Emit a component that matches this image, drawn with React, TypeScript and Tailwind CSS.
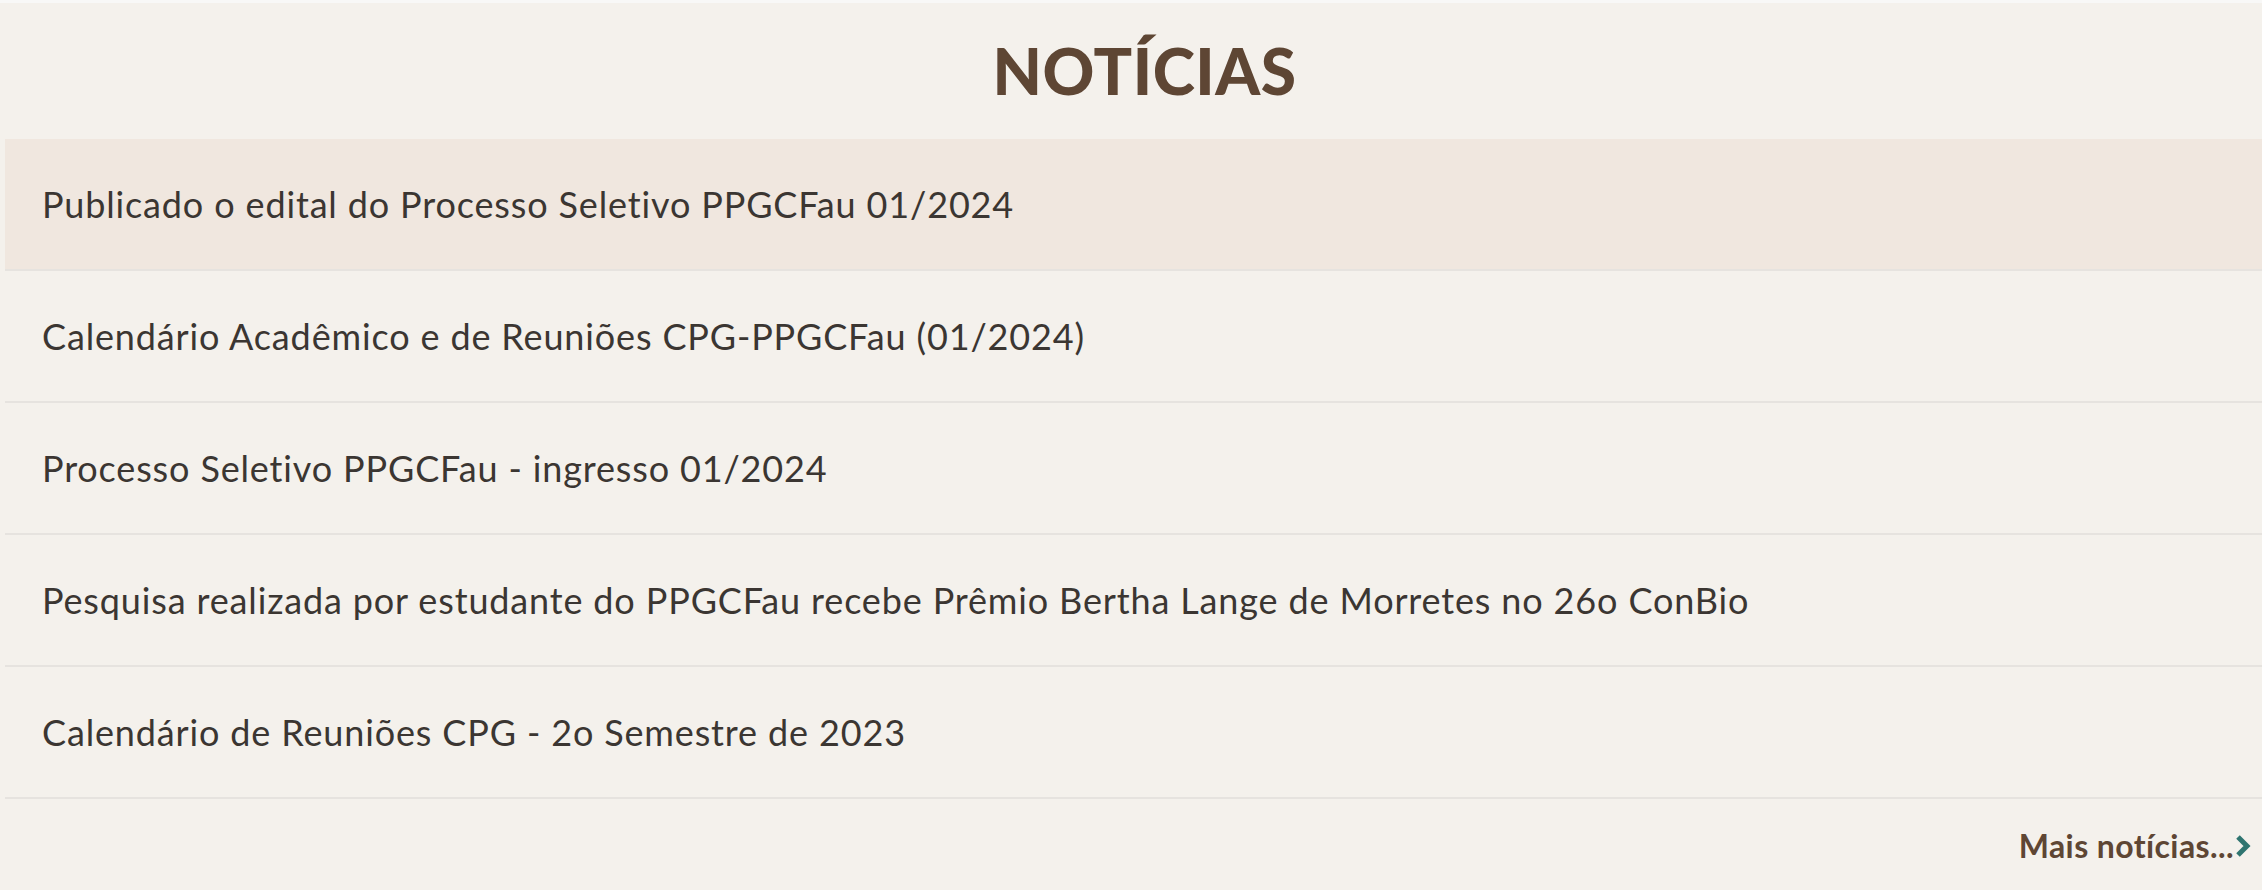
import React from "react";

const items = [
  "Publicado o edital do Processo Seletivo PPGCFau 01/2024",
  "Calendário Acadêmico e de Reuniões CPG-PPGCFau (01/2024)",
  "Processo Seletivo PPGCFau - ingresso 01/2024",
  "Pesquisa realizada por estudante do PPGCFau recebe Prêmio Bertha Lange de Morretes no 26o ConBio",
  "Calendário de Reuniões CPG - 2o Semestre de 2023",
];

export default function App() {
  return (
    <div
      className="min-h-screen bg-[#f4f1ec] border-t-[3px] border-[#f8f8f7] pl-[5px]"
      style={{ fontFamily: "Lato, 'Open Sans', sans-serif" }}
    >
      <h2 className="h-[136px] flex items-center justify-center pl-[22px] text-[64px] font-black tracking-[0.5px] text-[#5e4634] leading-none">
        NOTÍCIAS
      </h2>
      <ul>
        {items.map((t, i) => (
          <li
            key={i}
            className={`h-[132px] flex items-center pl-[37px] border-b-2 border-[#e6e3df] text-[36px] font-normal tracking-[0.85px] text-[#3b3632] ${
              i === 0 ? "bg-[#f0e7df]" : ""
            }`}
          >
            {t}
          </li>
        ))}
      </ul>
      <div className="flex justify-end pr-[10px] pt-[31px]">
        <a className="flex items-center text-[32px] font-bold tracking-[0.4px] text-[#5e4634] leading-none">
          Mais notícias...
          <svg width="17" height="24" viewBox="0 0 17 24" className="ml-[1px]">
            <path d="M3 3 L12 12 L3 21" stroke="#2f7570" strokeWidth="5" fill="none" />
          </svg>
        </a>
      </div>
    </div>
  );
}
